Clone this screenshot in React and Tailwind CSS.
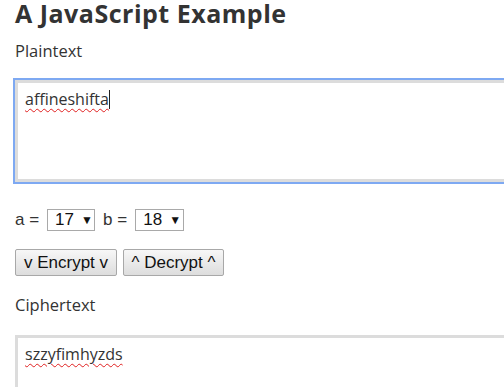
export default function App() {
  return (
    <div className="w-[504px] h-[387px] overflow-hidden bg-white text-[#333] font-['Open_Sans',sans-serif]">
      <div className="pl-[15px] w-[620px]">
        <h1 className="text-[25px] font-bold leading-[26px] tracking-[0.5px] h-[41px] text-[#333] whitespace-nowrap">A JavaScript Example</h1>
        <div className="text-[16.5px] leading-[20px] h-[20px]">Plaintext</div>
        <div className="mt-[19px] h-[102px] border-[3px] border-[#dcdcdc] outline outline-[2px] outline-[#7ea9f2] bg-white pl-[7px] pt-[5px] text-[16px] leading-[22px]">
          <span className="underline decoration-wavy decoration-[#e02020] decoration-[1px] underline-offset-[3px]">affineshifta</span>
          <span className="inline-block w-[1px] h-[19px] bg-[#222] align-[-4px]"></span>
        </div>
        <div className="flex items-center gap-[8px] mt-[27px] h-[22px] text-[17px] text-[#333] font-['Liberation_Sans',Arial,sans-serif]">
          <span>a =</span>
          <span className="flex items-center h-[22px] w-[48px] border border-[#a9a9a9] bg-white pl-[7px] text-[#111]">
            <span>17</span>
            <span className="text-[12px] ml-[7px]">▼</span>
          </span>
          <span>b =</span>
          <span className="flex items-center h-[22px] w-[49px] border border-[#a9a9a9] bg-white pl-[7px] text-[#111]">
            <span>18</span>
            <span className="text-[12px] ml-[7px]">▼</span>
          </span>
        </div>
        <div className="flex gap-[6px] mt-[18px] font-['Liberation_Sans',Arial,sans-serif]">
          <button className="h-[27px] w-[102px] border border-[#a8a8a8] rounded-[2px] bg-gradient-to-b from-[#f7f7f7] to-[#dddddd] text-[17px] leading-[20px] text-[#111]">v Encrypt v</button>
          <button className="h-[27px] w-[101px] border border-[#a8a8a8] rounded-[2px] bg-gradient-to-b from-[#f7f7f7] to-[#dddddd] text-[17px] leading-[20px] text-[#111]">^ Decrypt ^</button>
        </div>
        <div className="text-[16.5px] leading-[20px] h-[20px] mt-[19px]">Ciphertext</div>
        <div className="mt-[20px] h-[102px] border-[3px] border-[#dcdcdc] bg-white pl-[7px] pt-[5px] text-[16px] leading-[22px]">
          <span className="underline decoration-wavy decoration-[#e02020] decoration-[1px] underline-offset-[3px]">szzyfimhyzds</span>
        </div>
      </div>
    </div>
  );
}
